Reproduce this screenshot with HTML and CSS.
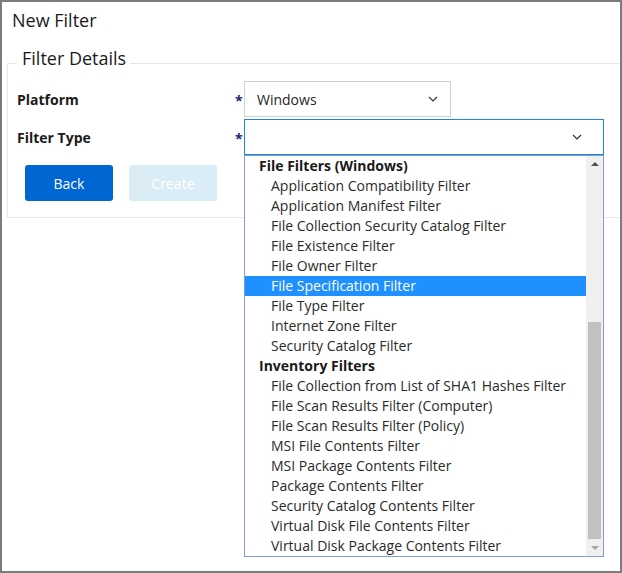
FILE: index.html
```html
<!DOCTYPE html>
<html>
<head>
<meta charset="utf-8">
<link rel="stylesheet" href="styles.css">
</head>
<body>
<div class="frame">
  <h1 class="title">New Filter</h1>
  <fieldset class="details">
    <legend class="legend">Filter Details</legend>
    <div class="form">
      <div class="label">Platform</div>
      <div class="req">*</div>
      <div class="select platform">
        <span class="value">Windows</span>
        <svg class="chev" width="10" height="6" viewBox="0 0 10 6"><path d="M1 1l4 4 4-4" fill="none" stroke="#333" stroke-width="1.2"/></svg>
      </div>
      <div class="label">Filter Type</div>
      <div class="req">*</div>
      <div class="select type focused">
        <span class="value"></span>
        <svg class="chev" width="10" height="6" viewBox="0 0 10 6"><path d="M1 1l4 4 4-4" fill="none" stroke="#333" stroke-width="1.2"/></svg>
        <div class="dropdown">
          <ul class="options">
            <li class="group">File Filters (Windows)</li>
            <li>Application Compatibility Filter</li>
            <li>Application Manifest Filter</li>
            <li>File Collection Security Catalog Filter</li>
            <li>File Existence Filter</li>
            <li>File Owner Filter</li>
            <li class="selected">File Specification Filter</li>
            <li>File Type Filter</li>
            <li>Internet Zone Filter</li>
            <li>Security Catalog Filter</li>
            <li class="group">Inventory Filters</li>
            <li>File Collection from List of SHA1 Hashes Filter</li>
            <li>File Scan Results Filter (Computer)</li>
            <li>File Scan Results Filter (Policy)</li>
            <li>MSI File Contents Filter</li>
            <li>MSI Package Contents Filter</li>
            <li>Package Contents Filter</li>
            <li>Security Catalog Contents Filter</li>
            <li>Virtual Disk File Contents Filter</li>
            <li>Virtual Disk Package Contents Filter</li>
          </ul>
          <div class="scrollbar">
            <div class="arrow up"></div>
            <div class="track"><div class="thumb"></div></div>
            <div class="arrow down"></div>
          </div>
        </div>
      </div>
    </div>
    <div class="buttons">
      <button class="btn primary">Back</button>
      <button class="btn disabled">Create</button>
    </div>
  </fieldset>
</div>
</body>
</html>
```
FILE: styles.css
```css
* { box-sizing: border-box; }
html, body { margin: 0; padding: 0; }
body {
  font-family: "Open Sans", "Noto Sans", sans-serif;
  color: #1f1f1f;
  background: #fff;
}
.frame {
  width: 622px;
  height: 573px;
  border: 2px solid #7b7b7b;
  overflow: hidden;
  position: relative;
}
.title {
  margin: 0;
  padding: 5px 0 0 10px;
  font-size: 18px;
  font-weight: 400;
  line-height: 26px;
  color: #1a1a1a;
}
.details {
  margin: 13px -4px 0 5px;
  padding: 0 0 16px 9px;
  border: 1px solid #e6e6e6;
  min-width: 0;
}
.legend {
  padding: 0 4px 10px 5px;
  margin-left: 0;
  font-size: 18px;
  line-height: 24px;
  color: #1a1a1a;
}
.form {
  display: grid;
  grid-template-columns: 218px 9px 360px;
  grid-template-rows: 36px 36px;
  row-gap: 2px;
  align-items: center;
  margin-top: 1px;
}
.label {
  font-size: 14px;
  font-weight: 700;
  color: #1a1a1a;
}
.req {
  color: #1a237e;
  font-size: 14px;
  font-weight: 700;
  padding-top: 2px;
}
.select {
  position: relative;
  height: 36px;
  border: 1px solid #c7d1db;
  display: flex;
  align-items: center;
  padding: 0 12px 0 12px;
  font-size: 14px;
  color: #1f1f1f;
}
.select .value { flex: 1; }
.platform { width: 207px; }
.type { width: 360px; border-color: #1e88d8; }
.chev { display: block; }
.type .chev { margin-right: 9px; }
.dropdown {
  position: absolute;
  top: 35px;
  left: -1px;
  width: 360px;
  height: 402px;
  border: 1px solid #7f9ddb;
  background: #fff;
  display: flex;
  z-index: 5;
}
.options {
  list-style: none;
  margin: 0;
  padding: 0;
  flex: 1;
}
.options li {
  height: 20px;
  line-height: 20px;
  font-size: 14px;
  padding-left: 26px;
  color: #2b2b2b;
  white-space: nowrap;
}
.options li.group {
  padding-left: 14px;
  font-weight: 700;
  color: #1a1a1a;
}
.options li.selected {
  background: #1e90ff;
  color: #fff;
}
.scrollbar {
  width: 17px;
  background: #f0f0f0;
  display: flex;
  flex-direction: column;
}
.arrow {
  height: 17px;
  position: relative;
}
.arrow::after {
  content: "";
  position: absolute;
  left: 5px;
  top: 6px;
  border-left: 4px solid transparent;
  border-right: 4px solid transparent;
}
.arrow.up::after { border-bottom: 4px solid #505050; }
.arrow.down::after { border-top: 4px solid #a3a3a3; top: 7px; }
.track {
  flex: 1;
  display: flex;
  flex-direction: column;
  justify-content: flex-end;
}
.thumb {
  height: 217px;
  margin: 0 2px;
  background: #c1c1c1;
}
.buttons {
  display: flex;
  gap: 16px;
  margin-top: 10px;
  padding-left: 8px;
}
.btn {
  width: 88px;
  height: 36px;
  border: none;
  border-radius: 3px;
  font-family: "Open Sans", "Noto Sans", sans-serif;
  font-size: 14px;
  color: #fff;
}
.primary { background: #0066d2; }
.disabled { background: #daecf5; }
```
